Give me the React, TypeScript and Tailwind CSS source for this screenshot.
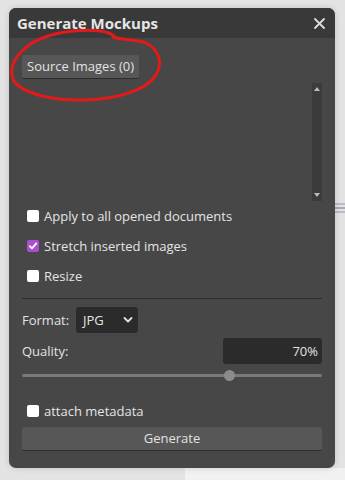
import React from "react";

function Check({ checked, label }: { checked?: boolean; label: string }) {
  return (
    <div className="flex items-center h-[30px] pl-[5px]">
      {checked ? (
        <span className="w-[12px] h-[12px] rounded-[2px] bg-[#a94fd0] flex items-center justify-center">
          <svg width="10" height="10" viewBox="0 0 10 10">
            <path d="M1.8 5.2 L4 7.4 L8.3 2.4" stroke="#fff" strokeWidth="1.8" fill="none" strokeLinecap="round" strokeLinejoin="round" />
          </svg>
        </span>
      ) : (
        <span className="w-[12px] h-[12px] rounded-[2px] bg-white" />
      )}
      <span className="ml-[5px] text-[13px] text-[#e4e4e4] leading-none">{label}</span>
    </div>
  );
}

export default function App() {
  const quality = 70;
  return (
    <div
      className="relative w-[345px] h-[480px] overflow-hidden bg-[#e3e3e3]"
      style={{ fontFamily: '"Open Sans", "Noto Sans", sans-serif' }}
    >
      <div className="absolute left-[185px] top-[468px] w-[160px] h-[12px] bg-[#f1f1f1]" />
      <div className="absolute left-[335px] top-[200px] w-[10px] h-[16px] flex flex-col justify-center gap-[2px]">
        <div className="h-[2px] bg-[#b9bcc4]" />
        <div className="h-[2px] bg-[#a9acb6]" />
        <div className="h-[2px] bg-[#b9bcc4]" />
      </div>
      <div className="relative ml-[9px] pt-[8px]">
        <div className="w-[326px] h-[460px] rounded-[7px] overflow-hidden bg-[#474747] shadow-[0_0_6px_rgba(0,0,0,0.15)] flex flex-col">
          <div className="h-[30px] bg-[#393939] flex items-center justify-between pl-[8px] pr-[10px]">
            <span className="text-[15px] font-bold text-[#e6e6e6] leading-none">Generate Mockups</span>
            <svg width="11" height="11" viewBox="0 0 11 11">
              <path d="M1 1 L10 10 M10 1 L1 10" stroke="#dcdcdc" strokeWidth="1.8" strokeLinecap="round" />
            </svg>
          </div>
          <div className="flex flex-col px-[13px]">
            <div className="pt-[15px]">
              <button className="h-[24px] px-[5px] bg-[#575757] rounded-[2px] border-b border-[#2e2e2e] text-[13px] text-[#e2e2e2] leading-none">
                Source Images (0)
              </button>
            </div>
            <div className="mt-[4px] h-[118px] flex justify-end">
              <div className="w-[10px] h-full bg-[#3b3b3b] flex flex-col justify-between items-center py-[4px]">
                <svg width="6" height="4" viewBox="0 0 6 4"><path d="M3 0 L6 4 L0 4 Z" fill="#bbb" /></svg>
                <svg width="6" height="4" viewBox="0 0 6 4"><path d="M0 0 L6 0 L3 4 Z" fill="#bbb" /></svg>
              </div>
            </div>
            <Check label="Apply to all opened documents" />
            <Check checked label="Stretch inserted images" />
            <Check label="Resize" />
            <div className="mt-[7px] h-[1px] bg-[#2c2c2c]" />
            <div className="mt-[8px] flex items-center h-[26px]">
              <span className="text-[13px] text-[#e2e2e2] w-[54px] leading-none">Format:</span>
              <div className="w-[62px] h-[26px] bg-[#2b2b2b] rounded-[3px] flex items-center justify-between pl-[7px] pr-[5px]">
                <span className="text-[13px] text-[#e4e4e4] leading-none">JPG</span>
                <svg width="10" height="8" viewBox="0 0 10 8">
                  <path d="M1.5 2 L5 5.5 L8.5 2" stroke="#e0e0e0" strokeWidth="1.8" fill="none" strokeLinecap="round" strokeLinejoin="round" />
                </svg>
              </div>
            </div>
            <div className="mt-[5px] flex items-center justify-between h-[26px]">
              <span className="text-[13px] text-[#e2e2e2] leading-none">Quality:</span>
              <div className="w-[99px] h-[26px] bg-[#2b2b2b] rounded-[3px] flex items-center justify-end pr-[4px]">
                <span className="text-[13px] text-[#e4e4e4] leading-none">{quality}%</span>
              </div>
            </div>
            <div className="relative mt-[10px] h-[3px] bg-[#7a7a7a] rounded-full">
              <div
                className="absolute top-[-4px] w-[11px] h-[11px] rounded-full bg-[#8c8c8c]"
                style={{ left: `${(quality / 100) * 289}px` }}
              />
            </div>
            <div className="mt-[28px] flex items-center h-[12px] pl-[5px]">
              <span className="w-[12px] h-[12px] rounded-[2px] bg-white" />
              <span className="ml-[5px] text-[13px] text-[#e4e4e4] leading-none">attach metadata</span>
            </div>
            <button className="mt-[10px] h-[24px] w-full bg-[#575757] rounded-[2px] border-b border-[#2e2e2e] text-[13px] text-[#e2e2e2] leading-none">
              Generate
            </button>
          </div>
        </div>
      </div>
      <svg className="absolute left-0 top-0 pointer-events-none" width="345" height="480" viewBox="0 0 345 480">
        <path
          d="M113 37 C120 40, 135 39, 146 43 C158 49, 163 61, 157 73 C149 89, 120 99, 85 100 C55 101, 20 94, 13 79 C7 64, 22 45, 45 37 C62 31, 85 29, 100 31 C108 32, 112 34, 115 37"
          stroke="#e21a1a"
          strokeWidth="3"
          fill="none"
          strokeLinecap="round"
        />
      </svg>
    </div>
  );
}
